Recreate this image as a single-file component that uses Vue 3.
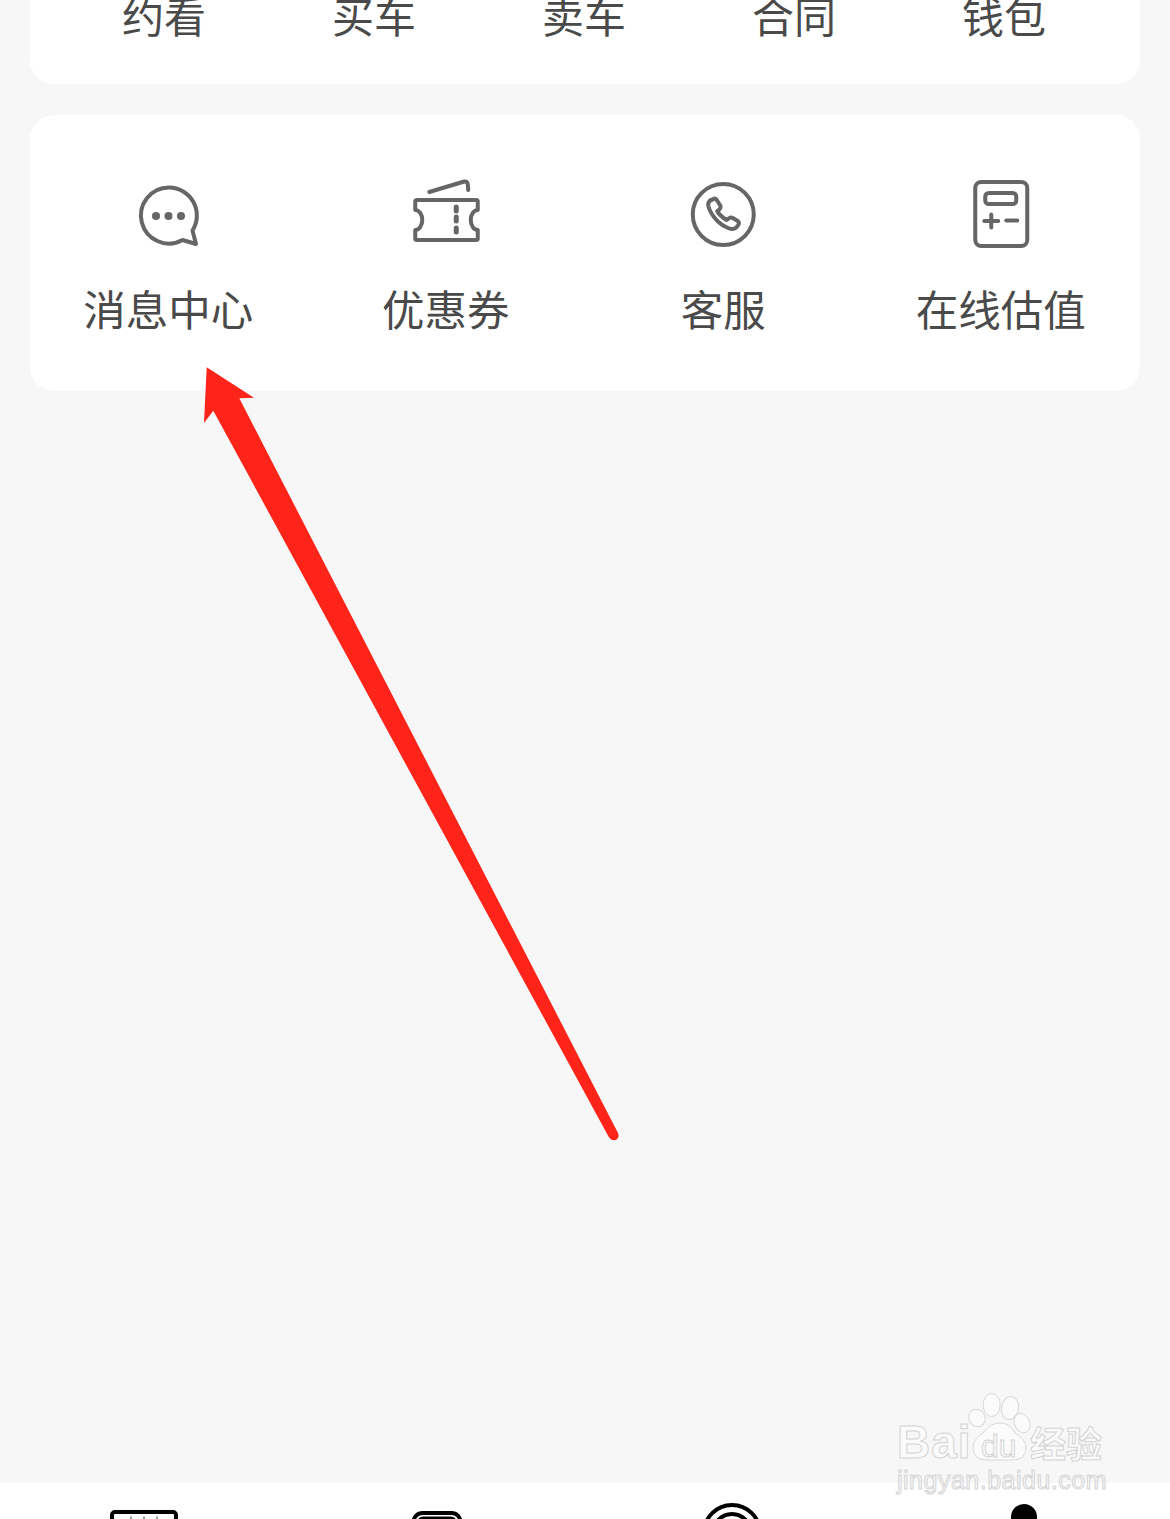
<script setup>
const topItems = ['约看', '买车', '卖车', '合同', '钱包']
</script>

<template>
  <div class="page">
    <div class="card top-card">
      <div v-for="item in topItems" :key="item" class="top-item">{{ item }}</div>
    </div>

    <div class="card tools">
      <div class="tool">
        <svg class="tool-icon" viewBox="129 175 80 80">
          <path d="M169 187.500a28 28 0 1 0 13.500 52.500l13.500 4-3.500-13.500a28 28 0 0 0-23.500-43z" />
          <circle class="dot" cx="156" cy="216" r="4" />
          <circle class="dot" cx="168.500" cy="216" r="4" />
          <circle class="dot" cx="181" cy="216" r="4" />
        </svg>
        <span>消息中心</span>
      </div>
      <div class="tool">
        <svg class="tool-icon" viewBox="406.750 175 80 80">
          <path d="M430 192l35-10.500q3-.5 3.500 2.500l.5 6" />
          <path d="M418 200h59q1.500 0 1.500 1.500v8.500a7 10 0 0 0 0 20v8.500q0 1.500-1.500 1.500h-59q-2 0-2-1.500v-8.500a7 10 0 0 0 0-20v-8.500q0-1.500 2-1.500z" />
          <path class="dash" d="M457 207v4M457 217v4M457 228v4" />
        </svg>
        <span>优惠券</span>
      </div>
      <div class="tool">
        <svg class="tool-icon" viewBox="684.250 175 80 80">
          <circle cx="723.500" cy="214.500" r="30.500" />
          <path d="M711 200.500l2.500-1.500q2-1 3.500 1l3.500 5.500q1 2-1 4l-2 1.500q2.500 5 9.500 9l2-1.500q2-1.500 4-.5l5 3q2 2 .5 4l-2 2.500q-3 2.500-7 1-9-3.500-14.500-10.500-5.500-7-6.500-12.500-.5-3.500 2.500-5.500z" />
        </svg>
        <span>客服</span>
      </div>
      <div class="tool">
        <svg class="tool-icon" viewBox="961.750 175 80 80">
          <rect x="976" y="182" width="52" height="64" rx="6" />
          <rect x="986" y="193" width="31" height="11" rx="3.500" />
          <path d="M985 221h14M992 214.500v13M1007 220.500h11" />
        </svg>
        <span>在线估值</span>
      </div>
    </div>

    <div class="tabbar">
      <div class="tab">
        <svg viewBox="0 0 100 36"><rect x="16" y="29" width="64" height="30" rx="3" /><path class="tab-dots" d="M34 35h2M47 35h2M60 35h2" /></svg>
      </div>
      <div class="tab">
        <svg viewBox="0 0 100 36"><rect x="24.500" y="30" width="47" height="30" rx="9" /><rect x="30" y="35" width="36" height="20" rx="4" class="thin" /></svg>
      </div>
      <div class="tab">
        <svg viewBox="0 0 100 36"><circle cx="51" cy="50" r="28" /><circle cx="51" cy="50" r="19" /></svg>
      </div>
      <div class="tab">
        <svg viewBox="0 0 100 36"><ellipse class="solid" cx="50" cy="34" rx="13" ry="13" /></svg>
      </div>
    </div>

    <svg class="arrow" viewBox="0 0 1170 1519">
      <path d="M206.700 367.300L254 397.700L239.300 398.300L618 1133Q620 1138 615.500 1140Q611 1141 608.500 1136.500L213.300 410.700L204 423Z" />
    </svg>

    <div class="watermark">
      <svg class="paw" viewBox="960 1385 80 80">
        <ellipse cx="991.700" cy="1405" rx="8.500" ry="11.500" />
        <ellipse cx="1010" cy="1408" rx="8.500" ry="11.500" transform="rotate(10 1010 1408)" />
        <ellipse cx="977" cy="1418" rx="8" ry="9" transform="rotate(-30 977 1418)" />
        <ellipse cx="1022" cy="1423" rx="7.500" ry="10" transform="rotate(-25 1022 1423)" />
        <path d="M1000 1423q10 0 15 10 11 6 11 15 0 12-14 12h-25q-14 0-14-12 0-9 10-15 7-10 17-10z" />
      </svg>
      <span class="wm-bai">Bai</span>
      <span class="wm-du">du</span>
      <span class="wm-cn">经验</span>
      <span class="wm-url">jingyan.baidu.com</span>
    </div>
  </div>
</template>

<style>
html, body {
  margin: 0;
  background: #f7f7f7;
}
</style>

<style scoped>
.page {
  position: relative;
  display: flex;
  flex-direction: column;
  gap: 31px;
  width: 1170px;
  height: 1519px;
  overflow: hidden;
  background: #f7f7f7;
  font-family: "Noto Sans CJK SC", "Noto Sans", sans-serif;
  color: #4a4a4a;
}
.card {
  margin: 0 30px;
  background: #fff;
}
.top-card {
  display: flex;
  align-items: flex-end;
  height: 84px;
  padding: 0 31px 39px 29px;
  box-sizing: border-box;
  border-radius: 0 0 24px 24px;
}
.top-item {
  flex: 1;
  text-align: center;
  font-size: 42px;
  line-height: 60px;
}
.tools {
  display: grid;
  grid-template-columns: repeat(4, 1fr);
  height: 276px;
  padding-top: 60px;
  box-sizing: border-box;
  border-radius: 24px;
}
.tool {
  display: flex;
  flex-direction: column;
  align-items: center;
  font-size: 42.500px;
  line-height: 60px;
}
.tool span {
  margin-top: 23px;
  margin-right: 1px;
}
.tool-icon {
  display: block;
  width: 80px;
  height: 80px;
  fill: none;
  stroke: #666;
  stroke-width: 4;
  stroke-linecap: round;
  stroke-linejoin: round;
}
.tool-icon .dot {
  fill: #666;
  stroke: none;
}
.tool-icon .dash {
  stroke-width: 5;
}
.tabbar {
  display: grid;
  grid-template-columns: repeat(4, 1fr);
  height: 36px;
  margin-top: auto;
  background: #fff;
}
.tab {
  display: flex;
  justify-content: center;
}
.tab svg {
  display: block;
  width: 100px;
  height: 36px;
  fill: none;
  stroke: #000;
  stroke-width: 4;
}
.tab .thin {
  stroke-width: 3;
}
.tab .tab-dots {
  stroke: #999;
  stroke-width: 3;
}
.tab .solid {
  fill: #000;
  stroke: none;
}
.arrow {
  position: absolute;
  left: 0;
  top: 0;
  width: 1170px;
  height: 1519px;
  fill: #ff2419;
  pointer-events: none;
}
.watermark {
  position: absolute;
  left: 0;
  top: 0;
  width: 1170px;
  height: 1519px;
  pointer-events: none;
  font-family: "Liberation Sans", sans-serif;
  color: #fbfbfb;
  -webkit-text-stroke: 1px #d4d4d4;
}
.watermark span {
  position: absolute;
  white-space: nowrap;
}
.paw {
  position: absolute;
  left: 960px;
  top: 1385px;
  width: 80px;
  height: 80px;
  fill: #fbfbfb;
  stroke: #d8d8d8;
  stroke-width: 1;
}
.wm-bai {
  left: 897px;
  top: 1417px;
  font-size: 46px;
  line-height: 50px;
  font-weight: 700;
  letter-spacing: 1px;
}
.wm-du {
  left: 981px;
  top: 1428px;
  font-size: 32px;
  line-height: 36px;
}
.wm-cn {
  left: 1030px;
  top: 1420px;
  font-family: "Noto Sans CJK SC", sans-serif;
  font-size: 36px;
  line-height: 44px;
  font-weight: 700;
}
.wm-url {
  left: 897px;
  top: 1466px;
  font-size: 25px;
  line-height: 28px;
  letter-spacing: .5px;
}
</style>
